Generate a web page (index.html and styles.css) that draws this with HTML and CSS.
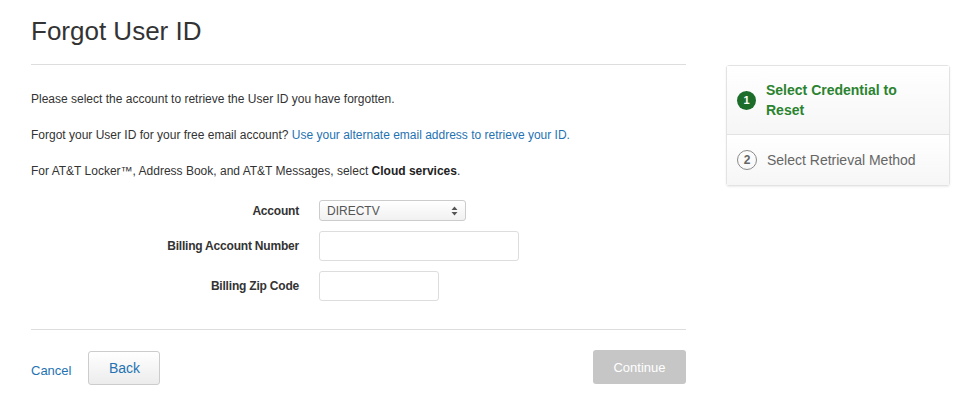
FILE: index.html
```html
<!DOCTYPE html>
<html lang="en">
<head>
    <meta charset="UTF-8">
    <meta name="viewport" content="width=device-width, initial-scale=1.0">
    <title>Forgot User ID</title>
    <link rel="stylesheet" href="styles.css">
</head>
<body>
    <div class="page">
        <div class="main">
            <h1>Forgot User ID</h1>

            <div class="intro">
                <p>Please select the account to retrieve the User ID you have forgotten.</p>
                <p>Forgot your User ID for your free email account? <a href="#">Use your alternate email address to retrieve your ID.</a></p>
                <p>For AT&amp;T Locker™, Address Book, and AT&amp;T Messages, select <strong>Cloud services</strong>.</p>
            </div>

            <div class="form">
                <label for="account">Account</label>
                <div class="select-wrap">
                    <select id="account">
                        <option>DIRECTV</option>
                        <option>Cloud services</option>
                    </select>
                    <svg class="select-arrow" width="7" height="10" viewBox="0 0 7 10">
                        <path d="M3.5 0.5 L6.5 4 L0.5 4 Z M3.5 9.5 L6.5 6 L0.5 6 Z" fill="#555"/>
                    </svg>
                </div>

                <label for="ban">Billing Account Number</label>
                <input type="text" id="ban" class="wide">

                <label for="zip">Billing Zip Code</label>
                <input type="text" id="zip" class="short">
            </div>

            <div class="actions">
                <a href="#" class="cancel">Cancel</a>
                <button class="btn-back">Back</button>
                <button class="btn-continue" disabled>Continue</button>
            </div>
        </div>

        <div class="side">
            <div class="steps">
                <div class="step active">
                    <span class="num">1</span>
                    <span class="step-text">Select Credential to Reset</span>
                </div>
                <div class="step">
                    <span class="num">2</span>
                    <span class="step-text">Select Retrieval Method</span>
                </div>
            </div>
        </div>
    </div>
</body>
</html>
```

FILE: styles.css
```css
* {
    margin: 0;
    padding: 0;
    box-sizing: border-box;
    font-family: Arial, 'Liberation Sans', Helvetica, sans-serif;
}

body {
    background: #fff;
    color: #333;
}

.page {
    display: flex;
    gap: 40px;
    padding-left: 31px;
}

.main {
    width: 655px;
}

h1 {
    font-size: 26px;
    font-weight: normal;
    line-height: 32px;
    color: #333;
    padding-top: 15px;
    padding-bottom: 17px;
    border-bottom: 1px solid #ddd;
}

.intro {
    padding-top: 26px;
}

.intro p {
    font-size: 12px;
    line-height: 16px;
    margin-bottom: 20px;
}

a {
    color: #1f73b2;
    text-decoration: none;
}

.intro strong {
    color: #222;
}

.form {
    display: grid;
    grid-template-columns: 268px auto;
    column-gap: 20px;
    row-gap: 10px;
    align-items: center;
    justify-items: start;
    padding-top: 1px;
    padding-bottom: 28px;
    border-bottom: 1px solid #ddd;
}

.form label {
    justify-self: end;
    font-size: 12px;
    font-weight: bold;
    letter-spacing: -0.2px;
    color: #333;
}

.select-wrap {
    position: relative;
    width: 147px;
    height: 21px;
}

select {
    appearance: none;
    -webkit-appearance: none;
    width: 100%;
    height: 100%;
    border: 1px solid #ccc;
    border-radius: 3px;
    background: linear-gradient(#fff, #f1f1f1);
    padding-left: 7px;
    font-size: 12px;
    color: #555;
    outline: none;
}

.select-arrow {
    position: absolute;
    right: 8px;
    top: 6px;
    pointer-events: none;
}

input {
    height: 30px;
    border: 1px solid #ddd;
    border-radius: 3px;
    padding: 0 8px;
    font-size: 12px;
    outline: none;
}

input.wide {
    width: 200px;
}

input.short {
    width: 120px;
}

.actions {
    display: flex;
    align-items: center;
    padding-top: 21px;
}

.cancel {
    font-size: 13px;
    margin-right: 17px;
    padding-top: 4px;
}

button {
    height: 34px;
    border-radius: 3px;
    font-size: 14px;
    cursor: pointer;
}

.btn-back {
    width: 72px;
    border: 1px solid #ccc;
    background: linear-gradient(#fff, #ececec);
    color: #1f73b2;
}

.btn-continue {
    margin-left: auto;
    margin-top: -2px;
    width: 93px;
    border: none;
    background: #c6c6c6;
    color: #fff;
    font-size: 13px;
    cursor: default;
}

.side {
    padding-top: 65px;
}

.steps {
    width: 224px;
    border: 1px solid #e3e3e3;
    border-radius: 3px;
    box-shadow: 0 1px 2px rgba(0, 0, 0, 0.08);
}

.step {
    display: flex;
    align-items: center;
    gap: 10px;
    padding: 0 10px;
    font-size: 14px;
    line-height: 20px;
    color: #666;
    height: 50px;
    background: linear-gradient(#fff, #f6f6f6);
}

.step.active {
    height: 69px;
    border-bottom: 1px solid #e3e3e3;
    color: #2a832f;
    font-weight: bold;
}

.num {
    flex: none;
    width: 20px;
    height: 20px;
    border-radius: 50%;
    border: 1.5px solid #8a8a8a;
    display: flex;
    align-items: center;
    justify-content: center;
    font-size: 12px;
    font-weight: bold;
    color: #666;
}

.step.active .num {
    width: 19px;
    height: 19px;
    border: none;
    background: #1c6c2a;
    color: #fff;
    font-size: 11px;
}

.step.active .step-text {
    width: 170px;
}
```
